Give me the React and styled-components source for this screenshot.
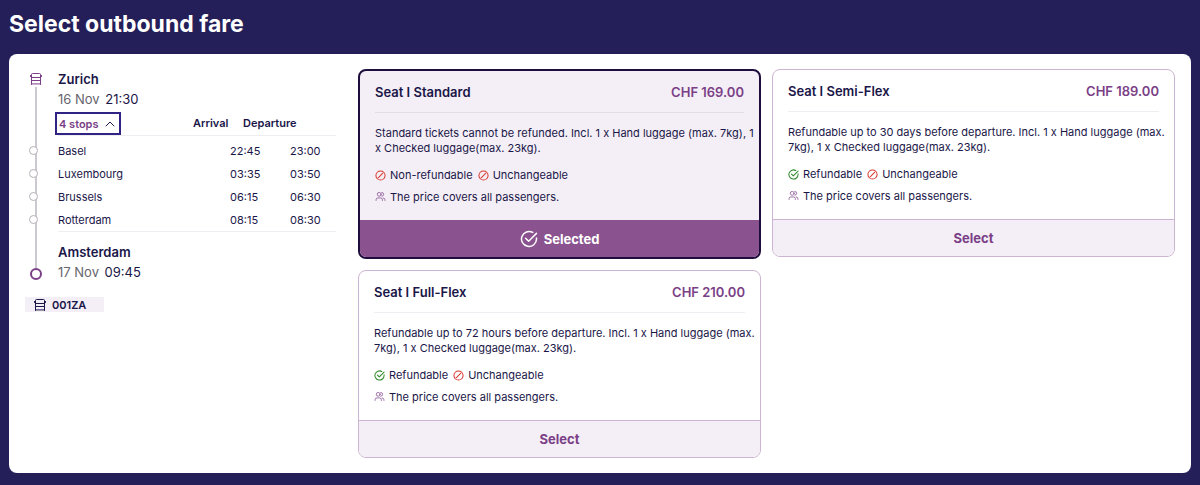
import React from 'react'
import styled, { createGlobalStyle } from 'styled-components'

const stops = [
  { city: 'Basel', arrival: '22:45', departure: '23:00' },
  { city: 'Luxembourg', arrival: '03:35', departure: '03:50' },
  { city: 'Brussels', arrival: '06:15', departure: '06:30' },
  { city: 'Rotterdam', arrival: '08:15', departure: '08:30' },
]

const fares = [
  {
    name: 'Seat I Standard',
    price: 'CHF 169.00',
    text: 'Standard tickets cannot be refunded. Incl. 1 x Hand luggage (max. 7kg), 1 x Checked luggage(max. 23kg).',
    refund: false,
    selected: true,
  },
  {
    name: 'Seat I Semi-Flex',
    price: 'CHF 189.00',
    text: 'Refundable up to 30 days before departure. Incl. 1 x Hand luggage (max. 7kg), 1 x Checked luggage(max. 23kg).',
    refund: true,
  },
  {
    name: 'Seat I Full-Flex',
    price: 'CHF 210.00',
    text: 'Refundable up to 72 hours before departure. Incl. 1 x Hand luggage (max. 7kg), 1 x Checked luggage(max. 23kg).',
    refund: true,
  },
]

const BusIcon = () => (
  <Icon viewBox="0 0 12 12" $size={12} $stroke={1}>
    <path d="M1.5 10.5v-9q0-1 1-1h7q1 0 1 1v9zM1.5 4.500h9M1.500 7.500h9M1.500 10.500v1M10.500 10.500v1M.5 2.500v1" />
    <path d="M11.500 2.500v1" />
  </Icon>
)

const CheckIcon = ({ size = 11, color = '#2f8a2b' }) => (
  <Icon viewBox="0 0 24 24" $size={size} $color={color} $stroke={size > 12 ? 2 : 2.2}>
    <path d="M22 10.5V12a10 10 0 1 1-5-8.7" />
    <path d="m7.5 11 4 4L22 4.5" />
  </Icon>
)

const NoIcon = () => (
  <Icon viewBox="0 0 24 24" $size={11} $color="#d8392f" $stroke={2.2}>
    <circle cx="12" cy="12" r="10" />
    <path d="M7 17 17 7" />
  </Icon>
)

const PeopleIcon = () => (
  <Icon viewBox="0 0 24 26" $size={11} $color="#8d5a98" $stroke={2}>
    <circle cx="9" cy="5.5" r="4.5" />
    <path d="M15 1a4.5 4.5 0 0 1 0 9M1.5 20v-1.5A4.5 4.5 0 0 1 6 14h6a4.5 4.5 0 0 1 4.5 4.5V20M18.5 14a4.5 4.5 0 0 1 4 4.5V20" />
  </Icon>
)

const FareCard = ({ fare }) => (
  <Card $selected={fare.selected}>
    <CardBody>
      <CardHead $selected={fare.selected}>
        <h2>{fare.name}</h2>
        <strong>{fare.price}</strong>
      </CardHead>
      <p>{fare.text}</p>
      <Terms>
        <span>
          {fare.refund ? <CheckIcon /> : <NoIcon />}
          {fare.refund ? 'Refundable' : 'Non-refundable'}
        </span>
        <span><NoIcon />Unchangeable</span>
      </Terms>
      <Terms>
        <span><PeopleIcon />The price covers all passengers.</span>
      </Terms>
    </CardBody>
    <SelectButton type="button" $selected={fare.selected} aria-pressed={!!fare.selected}>
      {fare.selected && <CheckIcon size={18} color="#fff" />}
      {fare.selected ? 'Selected' : 'Select'}
    </SelectButton>
  </Card>
)

const App = () => {
  return (
    <Page>
      <GlobalStyle />
      <h1>Select outbound fare</h1>
      <Panel>
        <Journey>
          <Route>
            <Rail>
              <BusIcon />
              <RailLine />
              <RailEnd />
            </Rail>
            <div>
              <Place>Zurich</Place>
              <When><span>16 Nov</span> 21:30</When>
              <StopTable>
                <colgroup>
                  <col />
                  <col className='arrival' />
                  <col className='departure' />
                </colgroup>
                <thead>
                  <tr>
                    <th>
                      <StopsButton type="button" aria-expanded="true">
                        4 stops
                        <Icon viewBox="0 0 10 10" $size={10} $color="#1d1a4d" $stroke={1}>
                          <path d="m1 7 4-4 4 4" />
                        </Icon>
                      </StopsButton>
                    </th>
                    <th>Arrival</th>
                    <th>Departure</th>
                  </tr>
                </thead>
                <tbody>
                  {stops.map((stop) => (
                    <tr key={stop.city}>
                      <td><StopDot />{stop.city}</td>
                      <td>{stop.arrival}</td>
                      <td>{stop.departure}</td>
                    </tr>
                  ))}
                </tbody>
              </StopTable>
              <Place>Amsterdam</Place>
              <When><span>17 Nov</span> 09:45</When>
            </div>
          </Route>
          <LineTag><BusIcon />001ZA</LineTag>
        </Journey>
        <Fares>
          {fares.map((fare) => <FareCard key={fare.name} fare={fare} />)}
        </Fares>
      </Panel>
    </Page>
  )
}

const GlobalStyle = createGlobalStyle`
    *{
        box-sizing:border-box ;
    }
    body{
        margin:0 ;
        background-color:#241f58 ;
        color:#1a1648 ;
        font-family:Inter, "Liberation Sans", sans-serif ;
        font-size:11px ;
    }
    h1, h2, p{
        margin:0 ;
    }
    button{
        font-family:inherit ;
        cursor:pointer ;
    }
`
const Page = styled.main`
    padding:8px 9px 11px ;
    h1{
        color:#fff ;
        font-size:23px ;
        font-weight:700 ;
        line-height:32px ;
        margin-bottom:14px ;
    }
`
const Panel = styled.section`
    display:grid ;
    grid-template-columns:311px minmax(0, 1fr) ;
    gap:22px ;
    align-items:start ;
    padding:15px 16px ;
    background-color:#fff ;
    border-radius:8px ;
`
const Icon = styled.svg`
    flex:none ;
    width:${(p) => p.$size}px ;
    height:${(p) => p.$size}px ;
    fill:none ;
    stroke:${(p) => p.$color || 'currentColor'} ;
    stroke-width:${(p) => p.$stroke} ;
    stroke-linecap:round ;
    stroke-linejoin:round ;
`
const Journey = styled.div`
    display:flex ;
    flex-direction:column ;
    align-items:stretch ;
    gap:15px ;
`
const Route = styled.div`
    display:grid ;
    grid-template-columns:22px minmax(0, 1fr) ;
    gap:11px ;
`
const Rail = styled.div`
    display:flex ;
    flex-direction:column ;
    align-items:center ;
    padding:4px 0 2px ;
    color:#7b3f87 ;
`
const RailLine = styled.div`
    flex:1 ;
    width:2px ;
    margin-top:2px ;
    background-color:#cbc9cd ;
`
const RailEnd = styled.div`
    width:12px ;
    height:12px ;
    border:2px solid #7b3f87 ;
    border-radius:50% ;
`
const Place = styled.div`
    font-size:13px ;
    font-weight:600 ;
    line-height:20px ;
`
const When = styled.div`
    font-size:13px ;
    line-height:20px ;
    span{
        color:#66646c ;
        margin-right:2px ;
    }
`
const StopTable = styled.table`
    width:100% ;
    table-layout:fixed ;
    border-collapse:collapse ;
    border-bottom:1px solid #f0edf2 ;
    margin:3px 0 10px ;
    .arrival{
        width:50px ;
    }
    .departure{
        width:93px ;
    }
    th{
        height:23px ;
        padding:0 0 2px ;
        border-bottom:1px solid #f0edf2 ;
        font-weight:600 ;
        text-align:left ;
    }
    th:first-child{
        padding:0 ;
    }
    td{
        position:relative ;
        height:23px ;
        padding:0 ;
        white-space:nowrap ;
    }
    td:nth-child(2){
        padding-left:37px ;
    }
    td:nth-child(3){
        padding-left:47px ;
    }
    tbody::before{
        content:"" ;
        display:table-row ;
        height:4px ;
    }
`
const StopsButton = styled.button`
    display:flex ;
    align-items:center ;
    gap:6px ;
    height:23px ;
    margin-left:-3px ;
    padding:0 4px 0 2px ;
    border:2px solid #2f2483 ;
    background-color:#fff ;
    color:#7b3f87 ;
    font-size:11px ;
    font-weight:600 ;
`
const StopDot = styled.span`
    position:absolute ;
    top:6px ;
    left:-29px ;
    width:9px ;
    height:9px ;
    border:1px solid #b4b0b8 ;
    border-radius:50% ;
    background-color:#fff ;
`
const LineTag = styled.div`
    display:flex ;
    align-items:center ;
    align-self:flex-start ;
    gap:6px ;
    height:15px ;
    padding:0 18px 0 9px ;
    background-color:#f4eff6 ;
    font-weight:600 ;
`
const Fares = styled.div`
    display:grid ;
    grid-template-columns:repeat(2, minmax(0, 1fr)) ;
    gap:11px ;
    align-items:start ;
`
const Card = styled.article`
    overflow:hidden ;
    border:${(p) => (p.$selected ? '2px solid #1f0d3d' : '1px solid #cdb4d2')} ;
    border-radius:8px ;
    background-color:${(p) => (p.$selected ? '#f4eff6' : '#fff')} ;
`
const CardBody = styled.div`
    padding:0 15px 15px ;
    p{
        line-height:15px ;
        margin:13px -12px 11px 0 ;
    }
`
const CardHead = styled.div`
    display:flex ;
    align-items:center ;
    justify-content:space-between ;
    height:42px ;
    border-bottom:1px solid ${(p) => (p.$selected ? '#e2dce6' : '#f1eef3')} ;
    font-size:13px ;
    h2{
        font-size:13px ;
        font-weight:600 ;
    }
    strong{
        color:#7b3f87 ;
        font-weight:600 ;
    }
`
const Terms = styled.div`
    display:flex ;
    gap:5px ;
    line-height:16px ;
    & + &{
        margin-top:6px ;
    }
    span{
        display:flex ;
        align-items:center ;
        gap:4px ;
    }
`
const SelectButton = styled.button`
    display:flex ;
    align-items:center ;
    justify-content:center ;
    gap:6px ;
    width:100% ;
    height:37px ;
    padding:0 ;
    border:0 ;
    border-top:1px solid ${(p) => (p.$selected ? '#8a538f' : '#cdb4d2')} ;
    background-color:${(p) => (p.$selected ? '#8a538f' : '#f4eff6')} ;
    color:${(p) => (p.$selected ? '#fff' : '#7b3f87')} ;
    font-size:13px ;
    font-weight:700 ;
`
export default App
